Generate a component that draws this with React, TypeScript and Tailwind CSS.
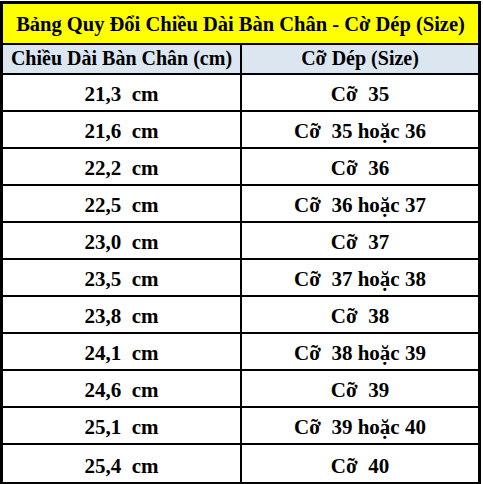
const rows: [string, string][] = [
  ["21,3  cm", "Cỡ  35"],
  ["21,6  cm", "Cỡ  35 hoặc 36"],
  ["22,2  cm", "Cỡ  36"],
  ["22,5  cm", "Cỡ  36 hoặc 37"],
  ["23,0  cm", "Cỡ  37"],
  ["23,5  cm", "Cỡ  37 hoặc 38"],
  ["23,8  cm", "Cỡ  38"],
  ["24,1  cm", "Cỡ  38 hoặc 39"],
  ["24,6  cm", "Cỡ  39"],
  ["25,1  cm", "Cỡ  39 hoặc 40"],
  ["25,4  cm", "Cỡ  40"],
];

export default function App() {
  return (
    <div className="w-[483px] h-[484px] bg-white pt-px font-[family-name:'Liberation_Serif',serif] font-bold text-black whitespace-pre">
      <div className="w-[481px] border-[3px] border-black">
        <div className="h-[41px] bg-[#ffff00] border-b-2 border-black flex items-end justify-center pb-[9px] text-[20.5px] leading-none">
          Bảng Quy Đổi Chiều Dài Bàn Chân - Cờ Dép (Size)
        </div>
        <div className="grid grid-cols-[239px_1fr] h-[30px] bg-[#dce6f1] border-b-2 border-black text-[20px] leading-none">
          <div className="border-r-2 border-black flex items-end justify-center pb-[5px]">Chiều Dài Bàn Chân (cm)</div>
          <div className="flex items-end justify-center pb-[5px]">Cỡ Dép (Size)</div>
        </div>
        {rows.map(([cm, size], i) => (
          <div
            key={i}
            className={`grid grid-cols-[239px_1fr] h-[37px] text-[21px] leading-none ${i < rows.length - 1 ? "border-b-2 border-black" : ""}`}
          >
            <div className="border-r-2 border-black flex items-end justify-center pb-[5px]">{cm}</div>
            <div className="flex items-end justify-center pb-[5px]">{size}</div>
          </div>
        ))}
      </div>
    </div>
  );
}
